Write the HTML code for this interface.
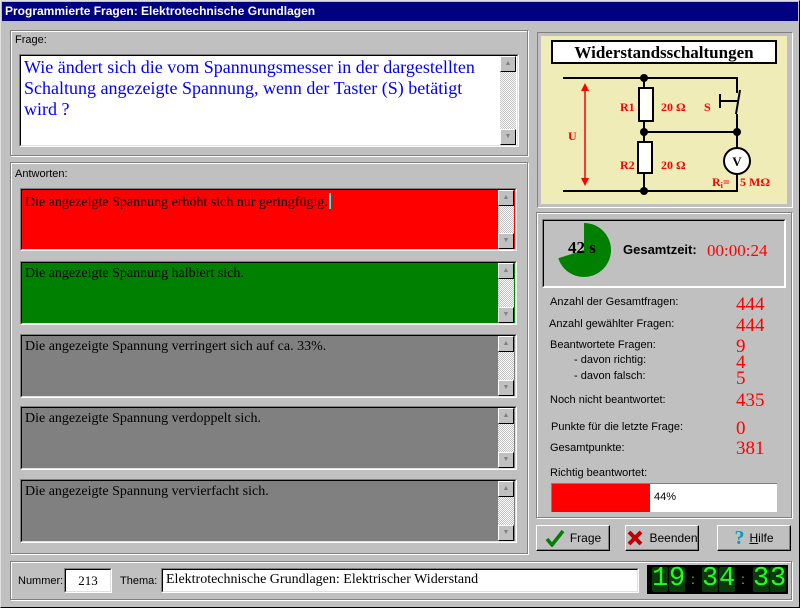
<!DOCTYPE html>
<html><head><meta charset="utf-8"><style>
*{box-sizing:border-box;margin:0;padding:0}
body{width:800px;height:608px;background:#c0c0c0;position:relative;overflow:hidden;font-family:"Liberation Sans",sans-serif;font-size:11px;color:#000}
.a{position:absolute}
.grp{position:absolute;border:1px solid #808080;box-shadow:1px 1px 0 #fff inset,1px 1px 0 #fff}
.sunk{position:absolute;border-top:1px solid #808080;border-left:1px solid #808080;border-right:1px solid #fff;border-bottom:1px solid #fff}
.sunk>.in{position:absolute;inset:0;border-top:1px solid #000;border-left:1px solid #000;border-right:1px solid #dfdfdf;border-bottom:1px solid #dfdfdf}
.sb{position:absolute;right:2px;top:1px;bottom:1px;width:16px;background:repeating-conic-gradient(#fff 0 25%,#c0c0c0 0 50%) 0 0/2px 2px}
.bt{position:absolute;left:0;width:16px;height:16px;background:#c0c0c0;border-top:1px solid #fff;border-left:1px solid #fff;border-right:1px solid #000;border-bottom:1px solid #000;font-size:7px;color:#808080;text-align:center;line-height:14px}
.ans{font-family:"Liberation Serif",serif;font-size:14px;left:4px;top:4px}
.lb{position:absolute;font-size:11px}
.v{position:absolute;left:736px;font-family:"Liberation Serif",serif;font-size:19px;color:#f00;line-height:19px}
.btn{position:absolute;top:525px;height:26px;background:#c0c0c0;border-top:1px solid #fff;border-left:1px solid #fff;border-right:1px solid #000;border-bottom:1px solid #000;box-shadow:-1px -1px 0 #808080 inset;font-size:12px;display:flex;align-items:center;justify-content:center;gap:5px}
.dg{position:absolute;top:2px;width:16px;height:25px;color:#20ff20;font-family:"Liberation Mono",monospace;font-size:27px;line-height:25px;text-align:center;background:#0a3a0a;border-radius:2px}
</style></head><body>
<div class="a" style="left:0;top:0;width:800px;height:608px;border-top:1px solid #dfdfdf;border-left:1px solid #dfdfdf;border-right:1px solid #000;border-bottom:1px solid #000"></div>
<div class="a" style="left:2px;top:2px;width:796px;height:19px;background:#000080;color:#fff;font-weight:bold;font-size:12px;line-height:19px;padding-left:3px">Programmierte Fragen: Elektrotechnische Grundlagen</div>

<div class="grp" style="left:10px;top:30px;width:518px;height:126px"></div>
<div class="a" style="left:15px;top:34px">Frage:</div>
<div class="sunk" style="left:19px;top:54px;width:500px;height:93px;background:#fff"><div class="in"></div>
<div class="a" style="left:4px;top:2px;width:470px;font-family:'Liberation Serif',serif;font-size:18px;line-height:21px;color:#0000ff">Wie ändert sich die vom Spannungsmesser in der dargestellten Schaltung angezeigte Spannung, wenn der Taster (S) betätigt wird ?</div>
<div class="sb"><div class="bt" style="top:0">▲</div><div class="bt" style="bottom:0">▼</div></div></div>

<div class="grp" style="left:10px;top:162px;width:518px;height:392px"></div>
<div class="a" style="left:15px;top:168px">Antworten:</div>

<div class="sunk" style="left:20px;top:188px;width:497px;height:63px;background:#f00"><div class="in"></div><div class="a ans">Die angezeigte Spannung erhöht sich nur geringfügig.<span style="display:inline-block;width:2px;height:16px;background:#0ff;vertical-align:-3px;margin-left:1px"></span></div><div class="sb"><div class="bt" style="top:0">▲</div><div class="bt" style="bottom:0">▼</div></div></div>
<div class="sunk" style="left:20px;top:261px;width:497px;height:64px;background:#008000"><div class="in"></div><div class="a ans">Die angezeigte Spannung halbiert sich.</div><div class="sb"><div class="bt" style="top:0">▲</div><div class="bt" style="bottom:0">▼</div></div></div>
<div class="sunk" style="left:20px;top:334px;width:497px;height:64px;background:#808080"><div class="in"></div><div class="a ans">Die angezeigte Spannung verringert sich auf ca. 33%.</div><div class="sb"><div class="bt" style="top:0">▲</div><div class="bt" style="bottom:0">▼</div></div></div>
<div class="sunk" style="left:20px;top:406px;width:497px;height:64px;background:#808080"><div class="in"></div><div class="a ans">Die angezeigte Spannung verdoppelt sich.</div><div class="sb"><div class="bt" style="top:0">▲</div><div class="bt" style="bottom:0">▼</div></div></div>
<div class="sunk" style="left:20px;top:479px;width:497px;height:64px;background:#808080"><div class="in"></div><div class="a ans">Die angezeigte Spannung vervierfacht sich.</div><div class="sb"><div class="bt" style="top:0">▲</div><div class="bt" style="bottom:0">▼</div></div></div>

<!-- circuit -->
<div class="sunk" style="left:537px;top:32px;width:256px;height:176px"></div>
<svg class="a" style="left:541px;top:36px" width="246" height="168" viewBox="0 0 246 168">
<rect width="246" height="168" fill="#f0ecb8"/>
<rect x="11" y="5" width="224" height="22" fill="#fff" stroke="#000" stroke-width="2"/>
<text x="123" y="22" text-anchor="middle" font-family="Liberation Serif" font-weight="bold" font-size="17" fill="#000">Widerstandsschaltungen</text>
<g stroke="#000" stroke-width="2" fill="none">
<path d="M22 42H196V57"/>
<path d="M199 54L195 78"/>
<path d="M179 65H198M179 58V72"/>
<path d="M196 78V138M196 112V155H22"/>
<path d="M103 42V52M103 85V106M103 137V155M103 96H196"/>
<rect x="98" y="52" width="14" height="33" fill="#fff"/>
<rect x="97" y="106" width="14" height="31" fill="#fff"/>
<circle cx="196" cy="125" r="13" fill="#fff"/>
</g>
<g fill="#000"><circle cx="103" cy="42" r="4"/><circle cx="103" cy="96" r="4"/><circle cx="196" cy="96" r="4"/><circle cx="103" cy="155" r="4"/></g>
<text x="196" y="130" text-anchor="middle" font-family="Liberation Serif" font-weight="bold" font-size="13" fill="#000">V</text>
<path d="M44 52V145" stroke="#f00" stroke-width="1.5"/>
<path d="M40 55L44 47L48 55ZM40 142L44 150L48 142Z" fill="#f00"/>
<g font-family="Liberation Serif" font-weight="bold" font-size="12" fill="#f00">
<text x="27" y="104">U</text>
<text x="79" y="75">R1</text><text x="120" y="75">20 Ω</text>
<text x="163" y="75">S</text>
<text x="79" y="133">R2</text><text x="120" y="133">20 Ω</text>
<text x="171" y="150">R<tspan font-size="8" dy="2">i</tspan><tspan dy="-2">=</tspan></text>
<text x="199" y="150">5 MΩ</text>
</g>
</svg>

<!-- stats group -->
<div class="grp" style="left:536px;top:212px;width:256px;height:306px"></div>
<div class="sunk" style="left:542px;top:219px;width:244px;height:69px"><div class="in" style="border-right-color:#fff;border-bottom-color:#fff"></div></div>
<svg class="a" style="left:555px;top:222px" width="60" height="60"><path d="M29 28L29 1A27 27 0 1 1 3.3 36.3Z" fill="#008000"/></svg>
<div class="a" style="left:568px;top:238px;font-family:'Liberation Serif',serif;font-weight:bold;font-size:17px">42 s</div>
<div class="a" style="left:623px;top:242px;font-weight:bold;font-size:13px">Gesamtzeit:</div>
<div class="a" style="left:707px;top:241px;font-family:'Liberation Serif',serif;font-size:17px;color:#f00">00:00:24</div>

<div class="lb" style="left:550px;top:296px">Anzahl der Gesamtfragen:</div><div class="v" style="top:295px">444</div>
<div class="lb" style="left:549px;top:318px">Anzahl gewählter Fragen:</div><div class="v" style="top:316px">444</div>
<div class="lb" style="left:550px;top:339px">Beantwortete Fragen:</div><div class="v" style="top:337px">9</div>
<div class="lb" style="left:574px;top:354px">- davon richtig:</div><div class="v" style="top:353px">4</div>
<div class="lb" style="left:574px;top:370px">- davon falsch:</div><div class="v" style="top:369px">5</div>
<div class="lb" style="left:550px;top:394px">Noch nicht beantwortet:</div><div class="v" style="top:391px">435</div>
<div class="lb" style="left:551px;top:421px">Punkte für die letzte Frage:</div><div class="v" style="top:419px">0</div>
<div class="lb" style="left:550px;top:442px">Gesamtpunkte:</div><div class="v" style="top:439px">381</div>
<div class="lb" style="left:550px;top:467px">Richtig beantwortet:</div>
<div class="a" style="left:551px;top:483px;width:226px;height:29px;background:#fff;border-top:1px solid #808080;border-left:1px solid #808080"></div>
<div class="a" style="left:552px;top:484px;width:98px;height:28px;background:#f00"></div>
<div class="a" style="left:654px;top:491px;font-size:11px">44%</div>

<!-- buttons -->
<div class="btn" style="left:536px;width:74px"><svg width="20" height="18"><path d="M2 10L7 16L18 2" stroke="#008000" stroke-width="3.5" fill="none"/></svg>Frage</div>
<div class="btn" style="left:625px;width:74px"><svg width="18" height="18"><path d="M3 3L15 15M15 3L3 15" stroke="#c00000" stroke-width="4"/></svg>Beenden</div>
<div class="btn" style="left:717px;width:74px"><span style="font-weight:bold;font-size:20px;color:#00a0c0;font-family:'Liberation Serif',serif">?</span><span><u>H</u>ilfe</span></div>

<!-- bottom -->
<div class="grp" style="left:10px;top:561px;width:782px;height:39px"></div>
<div class="a" style="left:18px;top:575px">Nummer:</div>
<div class="sunk" style="left:64px;top:568px;width:48px;height:25px;background:#fff"><div class="in"></div><div class="a" style="left:0;right:0;top:4px;text-align:center;font-family:'Liberation Serif',serif;font-size:13px">213</div></div>
<div class="a" style="left:120px;top:575px">Thema:</div>
<div class="sunk" style="left:161px;top:568px;width:478px;height:25px;background:#fff"><div class="in"></div><div class="a" style="left:4px;top:3px;font-family:'Liberation Serif',serif;font-size:14px">Elektrotechnische Grundlagen: Elektrischer Widerstand</div></div>
<div class="a" style="left:647px;top:565px;width:141px;height:29px;background:#000">
<div class="dg" style="left:5px">1</div><div class="dg" style="left:22px">9</div>
<div class="a" style="left:44px;top:2px;color:#20ff20;font-size:14px;line-height:25px">:</div>
<div class="dg" style="left:55px">3</div><div class="dg" style="left:72px">4</div>
<div class="a" style="left:94px;top:2px;color:#20ff20;font-size:14px;line-height:25px">:</div>
<div class="dg" style="left:106px">3</div><div class="dg" style="left:123px">3</div>
</div>
</body></html>
